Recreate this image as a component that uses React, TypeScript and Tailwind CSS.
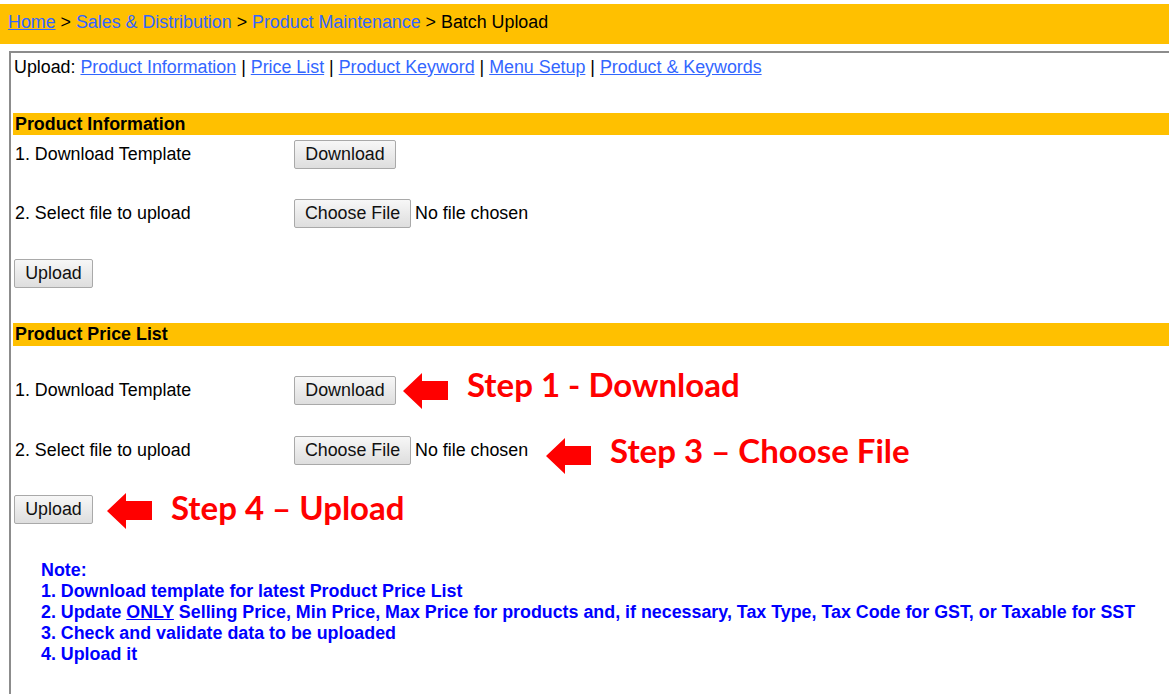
import React from "react";

const LINK = "text-[#3366ff]";

function Btn({ w, children }: { w: string; children: React.ReactNode }) {
  return (
    <div
      className={`${w} h-[29px] flex items-center justify-center border border-[#a9a9a9] rounded-[2px] bg-gradient-to-b from-[#f7f7f7] to-[#dedede] text-[17.85px] text-[#111]`}
    >
      {children}
    </div>
  );
}

function Arrow() {
  return (
    <svg width="45" height="36" viewBox="0 0 45 36" className="shrink-0">
      <polygon points="0,18 19,0 19,8 45,8 45,27 19,27 19,36" fill="#ff0000" />
    </svg>
  );
}

function Step({ children, cls }: { children: React.ReactNode; cls: string }) {
  return (
    <div
      className={`text-[33px] leading-[33px] font-bold text-[#ff0000] whitespace-nowrap ${cls}`}
      style={{ fontFamily: "Lato, 'Open Sans', sans-serif" }}
    >
      {children}
    </div>
  );
}

function Header({ title, h }: { title: string; h: string }) {
  return (
    <div className={`ml-[2px] ${h} bg-[#ffc000] flex items-center pl-[2px] font-bold text-[17.85px] text-black`}>
      {title}
    </div>
  );
}

export default function App() {
  return (
    <div
      className="w-[1169px] h-[694px] overflow-hidden bg-white text-black"
      style={{ fontFamily: "'Liberation Sans', Arial, sans-serif" }}
    >
      {/* Breadcrumb */}
      <div className="mt-[4px] h-[40px] bg-[#ffc000] pl-[8px] pt-[8px] text-[17.85px] leading-[20px] whitespace-nowrap">
        <span className={`${LINK} underline`}>Home</span>
        <span> &gt; </span>
        <span className={LINK}>Sales &amp; Distribution</span>
        <span> &gt; </span>
        <span className={LINK}>Product Maintenance</span>
        <span> &gt; </span>
        <span>Batch Upload</span>
      </div>

      {/* Content box */}
      <div className="mt-[7px] ml-[9px] w-[1200px] h-[700px] border-l-2 border-t-2 border-[#8c8c8c]">
        <div className="h-[28px] flex items-center pl-[3px] text-[17.85px] whitespace-nowrap">
          <span>Upload:&nbsp;</span>
          <span className={`${LINK} underline`}>Product Information</span>
          <span>&nbsp;|&nbsp;</span>
          <span className={`${LINK} underline`}>Price List</span>
          <span>&nbsp;|&nbsp;</span>
          <span className={`${LINK} underline`}>Product Keyword</span>
          <span>&nbsp;|&nbsp;</span>
          <span className={`${LINK} underline`}>Menu Setup</span>
          <span>&nbsp;|&nbsp;</span>
          <span className={`${LINK} underline`}>Product &amp; Keywords</span>
        </div>

        {/* Product Information */}
        <div className="mt-[32px]">
          <Header title="Product Information" h="h-[22px]" />
        </div>
        <div className="mt-[5px] h-[29px] flex items-center pl-[4px] text-[17.85px]">
          <div className="w-[279px]">1. Download Template</div>
          <Btn w="w-[102px]">Download</Btn>
        </div>
        <div className="mt-[30px] h-[29px] flex items-center pl-[4px] text-[17.85px]">
          <div className="w-[279px]">2. Select file to upload</div>
          <Btn w="w-[117px]">Choose File</Btn>
          <span className="ml-[4px]">No file chosen</span>
        </div>
        <div className="mt-[31px] h-[29px] flex items-center pl-[3px] text-[17.85px]">
          <Btn w="w-[79px]">Upload</Btn>
        </div>

        {/* Product Price List */}
        <div className="mt-[35px]">
          <Header title="Product Price List" h="h-[23px]" />
        </div>
        <div className="mt-[30px] h-[29px] flex items-center pl-[4px] text-[17.85px]">
          <div className="w-[279px]">1. Download Template</div>
          <Btn w="w-[102px]">Download</Btn>
          <div className="ml-[7px] flex items-center">
            <Arrow />
          </div>
          <Step cls="ml-[19px] -translate-y-[6px]">Step 1 - Download</Step>
        </div>
        <div className="mt-[31px] h-[29px] flex items-center pl-[4px] text-[17.85px]">
          <div className="w-[279px]">2. Select file to upload</div>
          <Btn w="w-[117px]">Choose File</Btn>
          <span className="ml-[4px]">No file chosen</span>
          <div className="ml-[18px] flex items-center translate-y-[5px]">
            <Arrow />
          </div>
          <Step cls="ml-[19px]">Step 3 – Choose File</Step>
        </div>
        <div className="mt-[30px] h-[29px] flex items-center pl-[3px] text-[17.85px]">
          <Btn w="w-[79px]">Upload</Btn>
          <div className="ml-[14px] flex items-center translate-y-[1px]">
            <Arrow />
          </div>
          <Step cls="ml-[19px] -translate-y-[2px]">Step 4 – Upload</Step>
        </div>

        {/* Note */}
        <div className="mt-[36px] pl-[30px] text-[17.85px] leading-[21px] font-bold text-[#0000ff] whitespace-nowrap">
          <div>Note:</div>
          <div>1. Download template for latest Product Price List</div>
          <div>
            2. Update <span className="underline">ONLY</span> Selling Price, Min Price, Max Price for products and, if
            necessary, Tax Type, Tax Code for GST, or Taxable for SST
          </div>
          <div>3. Check and validate data to be uploaded</div>
          <div>4. Upload it</div>
        </div>
      </div>
    </div>
  );
}
